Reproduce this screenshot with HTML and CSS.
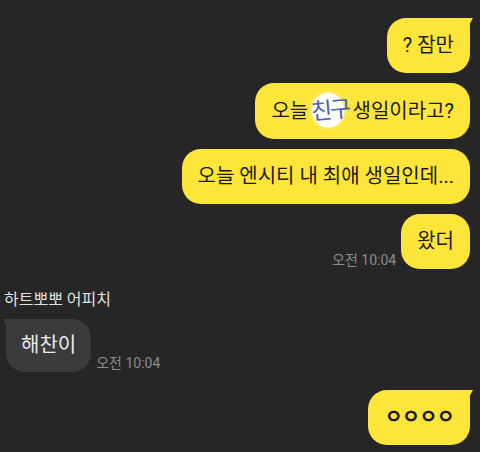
FILE: index.html
```html
<!DOCTYPE html>
<html lang="ko">
<head>
    <meta charset="UTF-8">
    <meta name="viewport" content="width=device-width, initial-scale=1.0">
    <title>채팅</title>
    <link rel="stylesheet" href="styles.css">
</head>
<body>
    <div class="chat">
        <div class="row mine">
            <div class="bubble yellow tail-right">? 잠만</div>
        </div>
        <div class="row mine">
            <div class="bubble yellow">오늘<span class="doodle">친구</span>생일이라고?</div>
        </div>
        <div class="row mine">
            <div class="bubble yellow">오늘 엔시티 내 최애 생일인데...</div>
        </div>
        <div class="row mine">
            <span class="time">오전 10:04</span>
            <div class="bubble yellow">왔더</div>
        </div>

        <div class="name">하트뽀뽀 어피치</div>
        <div class="row theirs">
            <div class="bubble gray tail-left">해찬이</div>
            <span class="time">오전 10:04</span>
        </div>

        <div class="row mine last">
            <div class="bubble yellow tail-right"><span class="ooo">ㅇㅇㅇㅇ</span></div>
        </div>
    </div>
</body>
</html>
```

FILE: styles.css
```css
html, body {
    margin: 0;
    padding: 0;
    background: #262626;
}
body {
    font-family: Roboto, "Noto Sans CJK KR", sans-serif;
    width: 480px;
    height: 452px;
    overflow: hidden;
}
.chat {
    display: flex;
    flex-direction: column;
    gap: 10px;
    padding: 18px 10px 0 5px;
}
.row {
    display: flex;
    align-items: flex-end;
    gap: 5px;
}
.mine {
    justify-content: flex-end;
}
.theirs {
    justify-content: flex-start;
    padding-left: 1px;
}
.last {
    margin-top: 8px;
}
.bubble {
    position: relative;
    font-size: 20px;
    line-height: 27px;
    padding: 14px 16px;
    border-radius: 19px;
    white-space: nowrap;
}
.yellow {
    background: #fee53a;
    color: #1a1a1a;
}
.gray {
    background: #3b3b3b;
    color: #ececec;
    padding: 13px 15px;
}
.tail-right {
    border-top-right-radius: 8px;
}
.tail-right::after {
    content: "";
    position: absolute;
    top: 0;
    right: -3px;
    width: 10px;
    height: 10px;
    background: #fee53a;
    clip-path: polygon(0 0, 100% 0, 45% 100%, 0 100%);
}
.tail-left {
    border-top-left-radius: 8px;
}
.tail-left::after {
    content: "";
    position: absolute;
    top: 0;
    left: -3px;
    width: 10px;
    height: 10px;
    background: #3b3b3b;
    clip-path: polygon(0 0, 100% 0, 100% 100%, 55% 100%);
}
.time {
    font-size: 14px;
    line-height: 16px;
    color: #8c8c8c;
    white-space: nowrap;
    padding-bottom: 1px;
}
.name {
    font-size: 16px;
    line-height: 22px;
    color: #e2e2e2;
    margin-top: 10px;
    margin-bottom: -2px;
    margin-left: -1px;
}
.doodle {
    display: inline-block;
    position: relative;
    z-index: 0;
    font-size: 23px;
    line-height: 27px;
    color: #4c60b6;
    letter-spacing: -2px;
    transform: rotate(-5deg);
    padding: 0 3px 0 1px;
    margin: 0 0 0 2px;
}
/* 손글씨 뒤 흰 동그라미 */
.doodle::before {
    content: "";
    position: absolute;
    z-index: -1;
    left: 2px;
    top: -4px;
    width: 32px;
    height: 34px;
    border-radius: 50%;
    background: #fff;
    box-shadow: 0 0 3px 1px rgba(255,255,255,0.6);
}
.ooo {
    font-weight: 700;
    letter-spacing: -1px;
}
```
